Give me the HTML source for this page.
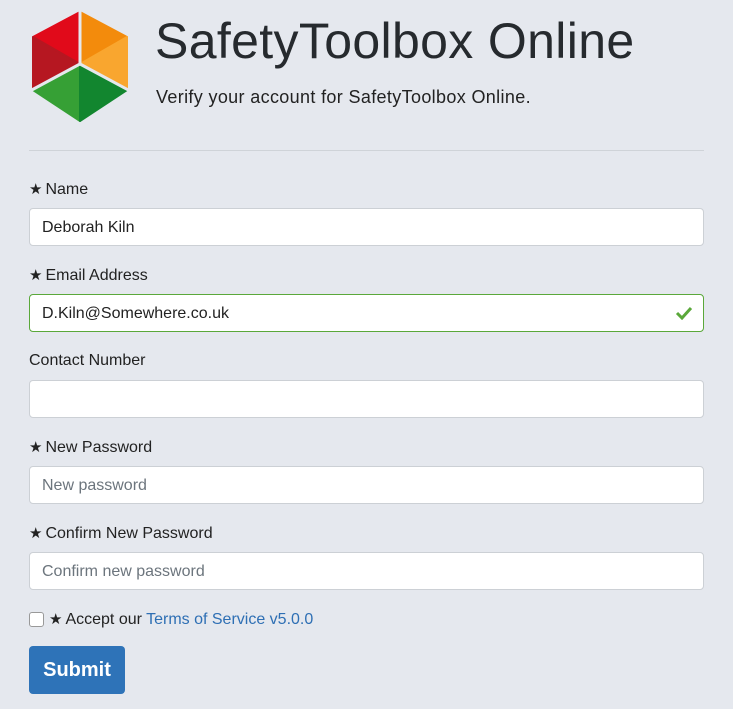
<!DOCTYPE html>
<html><head><style>
body{margin:0;background:#e5e8ee;font-family:"Liberation Sans",sans-serif;color:#222;width:733px;height:709px;overflow:hidden;position:relative}
.a{position:absolute}
h1{position:absolute;left:155px;top:12px;margin:0;font-weight:normal;font-size:50px;color:#262a2e;letter-spacing:0.35px}
.sub{left:156px;top:87px;font-size:18px;letter-spacing:0.35px}
hr{position:absolute;left:29px;top:150px;width:675px;margin:0;border:0;border-top:1px solid #cfd3d8}
label{position:absolute;left:29px;font-size:16px;color:#222}
.in{position:absolute;left:29px;width:673px;height:36px;background:#fff;border:1px solid #ccd0d5;border-radius:4px;font-size:16px;line-height:38px;box-sizing:content-box}
.in span{padding-left:12px}
.ph{color:#6c757d}
.st{font-size:15px;margin-right:3px}
</style></head><body>
<svg class="a" style="left:0;top:0" width="150" height="130">
<g stroke-linejoin="round">
<polygon points="80,12 33,37 80,64" fill="#e10a1a" stroke="#e10a1a" stroke-width="2"/>
<polygon points="33,37 33,90 80,64" fill="#b61721" stroke="#b61721" stroke-width="2"/>
<polygon points="80,12 127,37 80,64" fill="#f38b0c" stroke="#f38b0c" stroke-width="2"/>
<polygon points="127,37 127,90 80,64" fill="#f9a62f" stroke="#f9a62f" stroke-width="2"/>
<polygon points="33,90 80,121 80,64" fill="#36a035" stroke="#36a035" stroke-width="2"/>
<polygon points="80,121 127,90 80,64" fill="#12862f" stroke="#12862f" stroke-width="2"/>
</g>
<path d="M80,8 V64 L28,92 M80,64 L132,92" stroke="#e5e8ee" stroke-width="3" fill="none"/>
</svg>
<h1>SafetyToolbox Online</h1>
<div class="a sub">Verify your account for SafetyToolbox Online.</div>
<hr>
<label style="top:180px"><span class="st">★</span>Name</label>
<div class="in" style="top:208px"><span>Deborah Kiln</span></div>
<label style="top:266px"><span class="st">★</span>Email Address</label>
<div class="in" style="top:294px;border-color:#5aa83a"><span>D.Kiln@Somewhere.co.uk</span>
<svg class="a" style="right:10px;top:11px" width="18" height="14"><path d="M2 7l5 5 9-10" stroke="#5aa83a" stroke-width="3" fill="none"/></svg></div>
<label style="top:352px">Contact Number</label>
<div class="in" style="top:380px"></div>
<label style="top:438px"><span class="st">★</span>New Password</label>
<div class="in" style="top:466px"><span class="ph">New password</span></div>
<label style="top:524px"><span class="st">★</span>Confirm New Password</label>
<div class="in" style="top:552px"><span class="ph">Confirm new password</span></div>
<div class="a" style="left:29px;top:612px;width:13px;height:13px;background:#fff;border:1px solid #999;border-radius:3px"></div>
<label style="top:610px;left:49px"><span class="st">★</span>Accept our <span style="color:#2e6fb4">Terms of Service v5.0.0</span></label>
<div class="a" style="left:29px;top:646px;width:96px;height:48px;background:#2e73b8;border-radius:4px;color:#fff;font-size:20px;font-weight:bold;text-align:center;line-height:48px">Submit</div>
</body></html>
